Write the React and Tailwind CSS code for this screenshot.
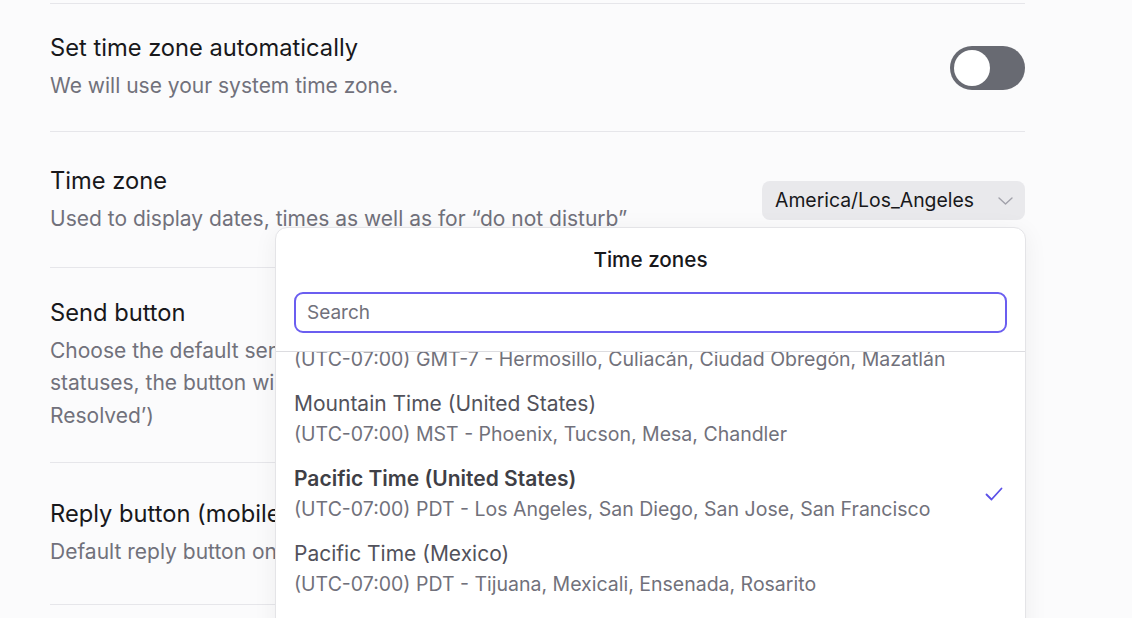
import React, { useState } from 'react';

const ZONES = [
  { name: 'Mexico Time (Sonora/Sinaloa)', sub: '(UTC-07:00) GMT-7 - Hermosillo, Culiacán, Ciudad Obregón, Mazatlán' },
  { name: 'Mountain Time (United States)', sub: '(UTC-07:00) MST - Phoenix, Tucson, Mesa, Chandler' },
  { name: 'Pacific Time (United States)', sub: '(UTC-07:00) PDT - Los Angeles, San Diego, San Jose, San Francisco', selected: true },
  { name: 'Pacific Time (Mexico)', sub: '(UTC-07:00) PDT - Tijuana, Mexicali, Ensenada, Rosarito' },
];

const Row = ({ title, children, control, className }) => (
  <div className={`flex items-center justify-between border-b border-[#e6e6ea] ${className}`}>
    <div className="flex flex-col">
      <div className="text-[23.7px] leading-[28px] text-[#18181b]">{title}</div>
      <div className="mt-[8px] text-[21px] leading-[32.5px] text-[#71717b]">{children}</div>
    </div>
    {control}
  </div>
);

export default function App() {
  const [auto, setAuto] = useState(false);

  return (
    <div className="relative min-h-[618px] w-full overflow-hidden bg-[#fbfbfc] font-['Inter',sans-serif]">
      <div className="ml-[50px] w-[975px]">
        <div className="h-[3px]" />
        <div className="border-b border-[#e6e6ea]" />

        <Row
          title="Set time zone automatically"
          className="pt-[30px] pb-[28px]"
          control={
            <button
              onClick={() => setAuto(!auto)}
              className="flex h-[44px] w-[75px] items-center rounded-full bg-[#686a72] px-[4px]"
            >
              <span className="block h-[36px] w-[36px] rounded-full bg-white" />
            </button>
          }
        >
          We will use your system time zone.
        </Row>

        <Row
          title="Time zone"
          className="pt-[35px] pb-[31.5px]"
          control={
            <div className="flex h-[39px] w-[263px] items-center justify-between rounded-[8px] bg-[#e9e9ec] pl-[13px] pr-[12px] text-[19.4px] text-[#18181b]">
              <span>America/Los_Angeles</span>
              <svg width="15" height="8" viewBox="0 0 15 8" fill="none" stroke="#a1a1aa" strokeWidth="1.4" strokeLinecap="round" strokeLinejoin="round">
                <path d="M1 1l6.5 6L14 1" />
              </svg>
            </div>
          }
        >
          Used to display dates, times as well as for “do not disturb”
        </Row>

        <Row title="Send button" className="pt-[31px] pb-[29.5px]">
          Choose the default send button action. For conversations with
          <br />
          statuses, the button will change status by default (e.g. ‘Send &amp;
          <br />
          Resolved’)
        </Row>

        <Row title="Reply button (mobile)" className="pt-[37px] pb-[35.5px]">
          Default reply button on mobile conversation view
        </Row>
      </div>

      {/* Time zone dropdown */}
      <div className="absolute left-[275px] top-[227px] h-[420px] w-[751px] rounded-t-[12px] border border-[#e4e4e7] bg-white shadow-[0_4px_24px_rgba(0,0,0,0.06)]">
        <div className="pt-[20px] text-center text-[20.7px] font-medium leading-[24px] text-[#18181b]">Time zones</div>
        <div className="px-[18px] pt-[20px] pb-[18px]">
          <input
            placeholder="Search"
            className="h-[41px] w-full rounded-[9px] border-[2.5px] border-[#6b5ef0] px-[11px] text-[19px] text-[#18181b] outline-none placeholder:text-[#71717b]"
          />
        </div>
        <div className="h-[280px] overflow-hidden border-t border-[#dcdce0]">
          <div className="-mt-[45px]">
            {ZONES.map((z) => (
              <div key={z.name} className="flex items-center justify-between pt-[7px] pb-[8px] pl-[18px] pr-[22px]">
                <div>
                  <div className={`text-[21px] leading-[30px] ${z.selected ? 'font-semibold text-[#3f3f46]' : 'text-[#52525b]'}`}>{z.name}</div>
                  <div className="text-[19.5px] leading-[30px] text-[#71717b]">{z.sub}</div>
                </div>
                {z.selected && (
                  <svg width="18" height="14" viewBox="0 0 18 14" fill="none" stroke="#5b50e8" strokeWidth="1.8" strokeLinecap="round" strokeLinejoin="round">
                    <path d="M1.5 7.5l5 5L16.5 1.5" />
                  </svg>
                )}
              </div>
            ))}
          </div>
        </div>
      </div>
    </div>
  );
}
